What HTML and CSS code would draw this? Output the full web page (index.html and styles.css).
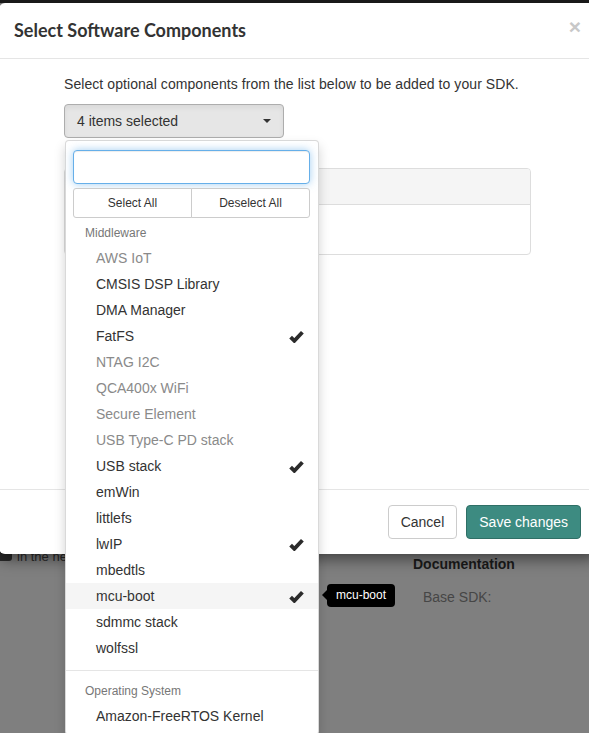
FILE: index.html
```html
<!DOCTYPE html>
<html>
<head>
<meta charset="utf-8">
<link rel="stylesheet" href="styles.css">
</head>
<body>
<div class="topbar"></div>
<div class="page">
  <div class="left-col"><span class="chip"></span><span class="faint">in the ne</span></div>
  <div class="right-col">
    <div class="doc-title">Documentation</div>
    <div class="doc-line">Base SDK:</div>
  </div>
</div>

<div class="modal">
  <div class="modal-header">
    <h4 class="modal-title">Select Software Components</h4>
    <span class="close">&times;</span>
  </div>
  <div class="modal-body">
    <div class="content">
      <p class="intro">Select optional components from the list below to be added to your SDK.</p>
      <div class="select-wrap">
        <button class="select-btn"><span>4 items selected</span><span class="caret"></span></button>
        <div class="menu">
          <div class="search"><input type="text" class="search-input"></div>
          <div class="actions">
            <button class="act">Select All</button>
            <button class="act">Deselect All</button>
          </div>
          <div class="header">Middleware</div>
          <div class="item disabled">AWS IoT</div>
          <div class="item">CMSIS DSP Library</div>
          <div class="item">DMA Manager</div>
          <div class="item">FatFS<svg class="check" viewBox="0 0 14 12"><polyline points="1.5,6.5 5,10 12.5,2" /></svg></div>
          <div class="item disabled">NTAG I2C</div>
          <div class="item disabled">QCA400x WiFi</div>
          <div class="item disabled">Secure Element</div>
          <div class="item disabled">USB Type-C PD stack</div>
          <div class="item">USB stack<svg class="check" viewBox="0 0 14 12"><polyline points="1.5,6.5 5,10 12.5,2" /></svg></div>
          <div class="item">emWin</div>
          <div class="item">littlefs</div>
          <div class="item">lwIP<svg class="check" viewBox="0 0 14 12"><polyline points="1.5,6.5 5,10 12.5,2" /></svg></div>
          <div class="item">mbedtls</div>
          <div class="item hover">mcu-boot<svg class="check" viewBox="0 0 14 12"><polyline points="1.5,6.5 5,10 12.5,2" /></svg>
            <div class="tooltip"><span class="tip-arrow"></span>mcu-boot</div>
          </div>
          <div class="item">sdmmc stack</div>
          <div class="item">wolfssl</div>
          <div class="divider"></div>
          <div class="header">Operating System</div>
          <div class="item">Amazon-FreeRTOS Kernel</div>
        </div>
      </div>
      <div class="panel">
        <div class="panel-heading"></div>
        <div class="panel-body"></div>
      </div>
    </div>
  </div>
  <div class="modal-footer">
    <button class="btn btn-default">Cancel</button>
    <button class="btn btn-primary">Save changes</button>
  </div>
</div>
</body>
</html>
```

FILE: styles.css
```css
html, body {
  margin: 0;
  padding: 0;
}
body {
  width: 589px;
  height: 733px;
  overflow: hidden;
  background: #7f7f7f;
  font-family: "Liberation Sans", Arial, sans-serif;
  font-size: 14px;
  color: #333;
  position: relative;
}
.topbar {
  height: 3px;
  background: #1c1c1c;
}
.page {
  display: grid;
  grid-template-columns: 413px 1fr;
  padding-top: 544px;
}
.left-col {
  display: flex;
  align-items: flex-start;
  gap: 5px;
  padding-top: 2px;
}
.chip {
  display: block;
  width: 12px;
  height: 12px;
  background: #2a2a2a;
  border-radius: 0 0 3px 0;
}
.faint {
  color: #2b2b2b;
  font-size: 13px;
  line-height: 16px;
  white-space: nowrap;
}
.doc-title {
  font-weight: bold;
  font-size: 14px;
  color: #1a1a1a;
  line-height: 20px;
  padding-top: 7px;
}
.doc-line {
  color: #464646;
  line-height: 20px;
  margin-top: 13px;
  padding-left: 10px;
}

.modal {
  position: absolute;
  top: 3px;
  left: -1px;
  width: 598px;
  background: #fff;
  border-radius: 6px;
  box-shadow: 0 5px 15px rgba(0,0,0,.5);
  display: flex;
  flex-direction: column;
}
.modal-header {
  padding: 15px;
  border-bottom: 1px solid #e5e5e5;
  display: flex;
  justify-content: space-between;
  align-items: flex-start;
}
.modal-title {
  margin: 0;
  font-family: Lato, "Liberation Sans", sans-serif;
  font-weight: bold;
  font-size: 18px;
  line-height: 25px;
  color: #333;
}
.close {
  font-family: "Liberation Sans", Arial, sans-serif;
  font-weight: bold;
  font-size: 21px;
  line-height: 1;
  color: #c8c8c8;
  margin-right: 1px;
  margin-top: -2px;
}
.modal-body {
  height: 400px;
  padding: 15px;
}
.content {
  padding-left: 50px;
  width: 467px;
}
.intro {
  margin: 0 0 10px;
  line-height: 20px;
  letter-spacing: 0.07px;
}
.select-wrap {
  position: relative;
  z-index: 5;
}
.select-btn {
  width: 220px;
  height: 34px;
  background: #e6e6e6;
  border: 1px solid #adadad;
  border-radius: 4px;
  box-shadow: inset 0 3px 5px rgba(0,0,0,.06);
  font-family: "Liberation Sans", Arial, sans-serif;
  font-size: 14px;
  color: #333;
  padding: 0 12px 0 12px;
  display: flex;
  align-items: center;
  justify-content: space-between;
}
.caret {
  width: 0;
  height: 0;
  border-top: 4px solid #333;
  border-left: 4px solid transparent;
  border-right: 4px solid transparent;
}
.menu {
  position: absolute;
  top: 36px;
  left: 1px;
  width: 252px;
  background: #fff;
  border: 1px solid rgba(0,0,0,.15);
  border-radius: 4px;
  box-shadow: 0 6px 12px rgba(0,0,0,.175);
  padding: 5px 0 5px;
}
.search {
  padding: 4px 8px 4px 7px;
}
.search-input {
  display: block;
  box-sizing: border-box;
  width: 100%;
  height: 34px;
  border: 1px solid #66afe9;
  border-radius: 4px;
  box-shadow: inset 0 1px 1px rgba(0,0,0,.075), 0 0 8px rgba(102,175,233,.6);
  outline: none;
  margin: 0;
}
.actions {
  display: flex;
  padding: 0 8px 4px 7px;
}
.act {
  flex: 1;
  height: 30px;
  background: #fff;
  border: 1px solid #ccc;
  font-family: "Liberation Sans", Arial, sans-serif;
  font-size: 12px;
  color: #333;
  margin: 0;
}
.act:first-child {
  border-radius: 3px 0 0 3px;
}
.act:last-child {
  border-radius: 0 3px 3px 0;
  margin-left: -1px;
}
.header {
  padding: 3px 20px 3px 19px;
  font-size: 12px;
  line-height: 17px;
  color: #777;
}
.item {
  position: relative;
  padding: 3px 20px 3px 30px;
  line-height: 20px;
  color: #333;
  display: flex;
  align-items: center;
  justify-content: space-between;
}
.item.disabled {
  color: #8a8a8a;
}
.item.hover {
  background: #f5f5f5;
}
.check {
  width: 15px;
  height: 13px;
  margin-right: -6px;
  fill: none;
  stroke: #2b2b2b;
  stroke-width: 3.6;
  stroke-linecap: butt;
  stroke-linejoin: miter;
}
.divider {
  height: 1px;
  margin: 9px 0;
  background: #e5e5e5;
}
.tooltip {
  position: absolute;
  left: 261px;
  top: 1px;
  height: 23px;
  padding: 0 9px;
  background: #000;
  color: #fff;
  font-size: 12px;
  line-height: 23px;
  border-radius: 4px;
  white-space: nowrap;
}
.tip-arrow {
  position: absolute;
  left: -5px;
  top: 6px;
  width: 0;
  height: 0;
  border-top: 5px solid transparent;
  border-bottom: 5px solid transparent;
  border-right: 5px solid #000;
}
.panel {
  margin-top: 30px;
  border: 1px solid #ddd;
  border-radius: 4px;
  overflow: hidden;
}
.panel-heading {
  height: 35px;
  background: #f5f5f5;
  border-bottom: 1px solid #ddd;
}
.panel-body {
  height: 49px;
}
.modal-footer {
  border-top: 1px solid #e5e5e5;
  padding: 15px 16px 15px 15px;
  display: flex;
  justify-content: flex-end;
  gap: 9px;
}
.btn {
  height: 34px;
  padding: 0 12px;
  border-radius: 4px;
  font-family: "Liberation Sans", Arial, sans-serif;
  font-size: 14px;
  margin: 0;
}
.btn-default {
  background: #fff;
  border: 1px solid #ccc;
  color: #333;
}
.btn-primary {
  background: #3d8b81;
  border: 1px solid #2f6f66;
  color: #fff;
}
```
